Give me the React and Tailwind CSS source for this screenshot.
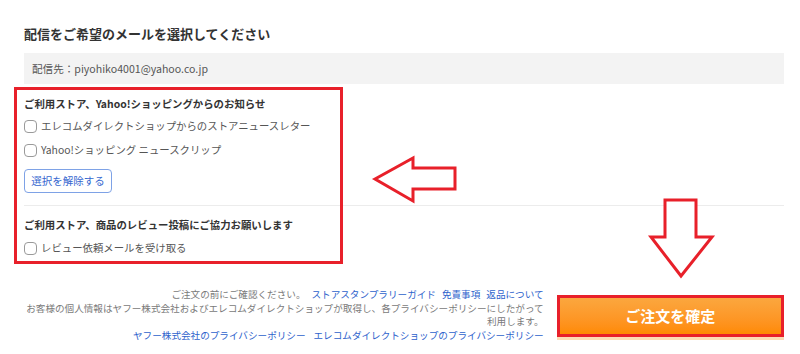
import React from "react";

function Check({ label }) {
  return (
    <div className="flex items-center h-[16px] gap-[4px]">
      <span className="w-[13px] h-[13px] border border-[#9a9a9a] rounded-[4px] bg-white shrink-0" />
      <span className="text-[10.4px] leading-[16px] text-[#555]">{label}</span>
    </div>
  );
}

export default function App() {
  return (
    <div
      className="relative w-[800px] h-[354px] bg-white overflow-hidden"
      style={{ fontFamily: '"Noto Sans CJK JP", "Noto Sans", sans-serif' }}
    >
      <div className="pl-6 pr-4 pt-[26px] flex flex-col">
        <h2 className="text-[13px] leading-[16px] font-bold text-[#333]">
          配信をご希望のメールを選択してください
        </h2>
        <div className="mt-[11px] h-[31px] bg-[#f3f3f3] px-2 flex items-center text-[10.6px] text-[#555]">
          配信先：piyohiko4001@yahoo.co.jp
        </div>

        <div className="mt-[13px] text-[10.4px] leading-[14px] font-bold text-[#333]">
          ご利用ストア、Yahoo!ショッピングからのお知らせ
        </div>
        <div className="mt-[7px]">
          <Check label="エレコムダイレクトショップからのストアニュースレター" />
        </div>
        <div className="mt-2">
          <Check label="Yahoo!ショッピング ニュースクリップ" />
        </div>
        <div className="mt-[11px]">
          <button className="h-[24px] w-[88px] border border-[#7ea2e6] rounded-[4px] bg-white text-[10.5px] text-[#3566cf] flex items-center justify-center">
            選択を解除する
          </button>
        </div>
        <div className="mt-[12px] h-px bg-[#ececec]" />

        <div className="mt-[12px] text-[10.4px] leading-[14px] font-bold text-[#333]">
          ご利用ストア、商品のレビュー投稿にご協力お願いします
        </div>
        <div className="mt-2">
          <Check label="レビュー依頼メールを受け取る" />
        </div>

        <div className="mt-[32px] flex items-start">
          <div className="w-[521px] text-right text-[9.6px] leading-[13.7px] text-[#7a7a7a] whitespace-nowrap">
            <div>
              ご注文の前にご確認ください。
              <span className="ml-[6px] text-[#2d62cc]">ストアスタンプラリーガイド</span>
              <span className="ml-[6px] text-[#2d62cc]">免責事項</span>
              <span className="ml-[6px] text-[#2d62cc]">返品について</span>
            </div>
            <div>お客様の個人情報はヤフー株式会社およびエレコムダイレクトショップが取得し、各プライバシーポリシーにしたがって</div>
            <div>利用します。</div>
            <div className="text-[#2d62cc]">
              <span>ヤフー株式会社のプライバシーポリシー</span>
              <span className="ml-[8px]">エレコムダイレクトショップのプライバシーポリシー</span>
            </div>
          </div>
          <button className="ml-[13px] mt-[7px] w-[228px] h-[42px] border-[3px] border-[#e8202a] bg-gradient-to-b from-[#fba73e] to-[#ff8a00] text-white text-[15px] font-bold flex items-center justify-center shadow-[0_3px_0_#fddcb4]">
            ご注文を確定
          </button>
        </div>
      </div>

      {/* annotation: red frame */}
      <div className="absolute left-[14px] top-[87px] w-[329px] h-[177px] border-[3px] border-[#e8202a] pointer-events-none" />

      {/* annotation arrows */}
      <svg className="absolute left-0 top-0 pointer-events-none" width="800" height="354">
        <polygon
          points="375,179 413,158 413,168 455,168 455,189 413,189 413,201"
          fill="white"
          stroke="#e8202a"
          strokeWidth="3"
          strokeLinejoin="miter"
        />
        <polygon
          points="665,200 696,200 696,237 712,237 681,276 651,237 665,237"
          fill="white"
          stroke="#e8202a"
          strokeWidth="3"
          strokeLinejoin="miter"
        />
      </svg>
    </div>
  );
}
